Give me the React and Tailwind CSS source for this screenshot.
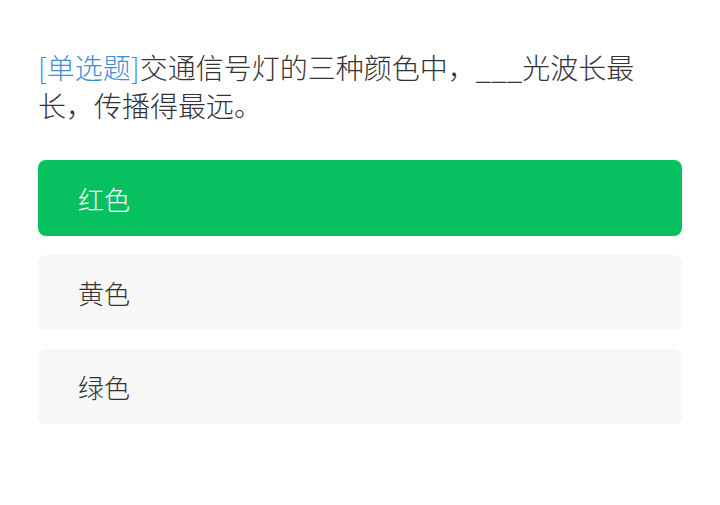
import React from "react";

const options = [
  { id: 1, label: "红色", selected: true },
  { id: 2, label: "黄色", selected: false },
  { id: 3, label: "绿色", selected: false },
];

export default function App() {
  return (
    <div
      className="w-[720px] h-[505px] bg-white px-[38px] pt-[48px] font-light"
      style={{ fontFamily: '"Noto Sans CJK SC", "Noto Sans", sans-serif' }}
    >
      <p className="text-[28px] leading-[38px] text-[#333333]">
        <span className="text-[#3d8fd8]">[单选题]</span>
        交通信号灯的三种颜色中，___光波长最长，传播得最远。
      </p>

      <div className="mt-[36px] flex flex-col gap-[19px]">
        {options.map((opt) => (
          <div
            key={opt.id}
            className={
              opt.selected
                ? "h-[76px] rounded-lg bg-[#07c160] text-white flex items-center pl-[40px] text-[26px]"
                : "h-[75px] rounded-lg bg-[#f7f7f7] text-[#333333] flex items-center pl-[40px] text-[26px]"
            }
          >
            {opt.label}
          </div>
        ))}
      </div>
    </div>
  );
}
